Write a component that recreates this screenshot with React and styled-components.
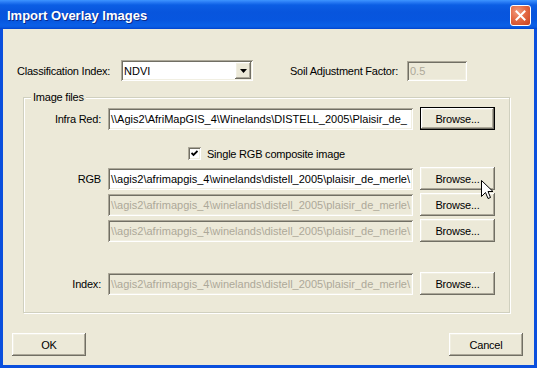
import React from 'react';
import styled, { createGlobalStyle } from 'styled-components';

const Global = createGlobalStyle`
  html, body { margin: 0; padding: 0; background: #ffffff; }
  body { font-family: "Liberation Sans", Arial, sans-serif; font-size: 11px; }
  * { box-sizing: border-box; }
`;

const Window = styled.div`
  position: relative;
  width: 537px;
  height: 368px;
  display: flex;
  flex-direction: column;
  background: #0A4FDD;
  overflow: hidden;
`;

const TitleBar = styled.div`
  flex: none;
  height: 29px;
  display: flex;
  align-items: center;
  justify-content: space-between;
  padding: 0 6px 0 7px;
  background: linear-gradient(
    to bottom,
    #3D95FF 0px,
    #2A7DF5 2px,
    #0B5EE4 5px,
    #0855DD 12px,
    #0756DF 20px,
    #0A5FE6 25px,
    #0A5BE2 27px,
    #0043CF 29px
  );
`;

const Title = styled.span`
  color: #ffffff;
  font-family: "Liberation Sans", Arial, sans-serif;
  font-weight: bold;
  font-size: 13px;
  text-shadow: 1px 1px 0 #0A2A8A;
  margin-top: 1px;
`;

const CloseButton = styled.div`
  width: 21px;
  height: 21px;
  border: 1px solid #ffffff;
  border-radius: 3px;
  background: radial-gradient(circle at 35% 30%, #F29B7E 0%, #E46A44 45%, #C9411E 100%);
  display: flex;
  align-items: center;
  justify-content: center;
  margin-top: 2px;
`;

const Body = styled.div`
  flex: 1;
  margin: 0 3px 3px 3px;
  background: #ECE9D8;
  display: flex;
  flex-direction: column;
  padding-top: 31px;
`;

const TopRow = styled.div`
  display: flex;
  align-items: center;
  height: 21px;
  padding: 0 67px 0 14px;
`;

const Label = styled.span`
  color: #000000;
  white-space: nowrap;
  letter-spacing: -0.22px;
  width: ${p => (p.$width ? `${p.$width}px` : 'auto')};
  text-align: ${p => (p.$right ? 'right' : 'left')};
`;

const Spacer = styled.div`
  flex: 1;
`;

const sunken = `
  box-shadow:
    inset 1px 1px 0 #ACA899,
    inset -1px -1px 0 #FFFFFF,
    inset 2px 2px 0 #716F64,
    inset -2px -2px 0 #F1EFE2;
`;

const raised = `
  box-shadow:
    inset -1px -1px 0 #716F64,
    inset 1px 1px 0 #FFFFFF,
    inset -2px -2px 0 #ACA899,
    inset 2px 2px 0 #F1EFE2;
`;

const Combo = styled.div`
  width: 132px;
  height: 21px;
  background: #ffffff;
  ${sunken}
  display: flex;
  align-items: center;
  padding: 2px 2px 2px 3px;
`;

const ComboText = styled.span`
  flex: 1;
  color: #000;
`;

const ComboButton = styled.div`
  width: 16px;
  height: 17px;
  background: #ECE9D8;
  ${raised}
  display: flex;
  align-items: center;
  justify-content: center;
`;

const Field = styled.div`
  width: ${p => p.$width}px;
  height: ${p => p.$height || 22}px;
  background: ${p => (p.$disabled ? '#ECE9D8' : '#FFFFFF')};
  color: ${p => (p.$disabled ? '#ACA899' : '#000000')};
  ${sunken}
  padding: 0 2px 0 3px;
  display: flex;
  align-items: center;
  white-space: nowrap;
  overflow: hidden;
`;

const Group = styled.div`
  position: relative;
  margin: 16px 0 0 20px;
  width: 487px;
  height: 216px;
  border: 1px solid #D0D0BF;
  box-shadow: inset 1px 1px 0 #ffffff, 1px 1px 0 #ffffff;
  padding-top: 9px;
  display: flex;
  flex-direction: column;
`;

const Legend = styled.span`
  position: absolute;
  top: -7px;
  left: 7px;
  padding: 0 2px;
  background: #ECE9D8;
  color: #000;
  letter-spacing: -0.22px;
`;

const FileRow = styled.div`
  display: grid;
  grid-template-columns: 77px 305px 75px;
  column-gap: 7px;
  align-items: center;
  height: 23px;
  margin-top: ${p => p.$gap || 0}px;
`;

const CheckRow = styled.div`
  display: flex;
  align-items: center;
  gap: 6px;
  height: 13px;
  margin-top: 17px;
  padding-left: 164px;
`;

const CheckBox = styled.div`
  width: 13px;
  height: 13px;
  background: #ffffff;
  ${sunken}
  display: flex;
  align-items: center;
  justify-content: center;
`;

const Button = styled.div`
  width: ${p => p.$width || 75}px;
  height: 23px;
  background: #ECE9D8;
  color: #000;
  letter-spacing: -0.2px;
  display: flex;
  align-items: center;
  justify-content: center;
  border: ${p => (p.$default ? '1px solid #000000' : 'none')};
  ${raised}
`;

const Footer = styled.div`
  display: flex;
  justify-content: space-between;
  margin-top: 20px;
  padding: 0 11px 0 9px;
`;

const Cursor = styled.svg`
  position: absolute;
  left: 481px;
  top: 180px;
`;

const path1 = '\\\\Agis2\\AfriMapGIS_4\\Winelands\\DISTELL_2005\\Plaisir_de_';
const path2 = '\\\\agis2\\afrimapgis_4\\winelands\\distell_2005\\plaisir_de_merle\\';

export default function App() {
  return (
    <>
      <Global />
      <Window>
        <TitleBar>
          <Title>Import Overlay Images</Title>
          <CloseButton>
            <svg width="11" height="11" viewBox="0 0 11 11">
              <path d="M1.5 1.5 L9.5 9.5 M9.5 1.5 L1.5 9.5" stroke="#ffffff" strokeWidth="2" strokeLinecap="square" />
            </svg>
          </CloseButton>
        </TitleBar>
        <Body>
          <TopRow>
            <Label $width={104}>Classification Index:</Label>
            <Combo>
              <ComboText>NDVI</ComboText>
              <ComboButton>
                <svg width="7" height="4" viewBox="0 0 7 4">
                  <path d="M0 0 H7 L3.5 4 Z" fill="#000" />
                </svg>
              </ComboButton>
            </Combo>
            <Spacer />
            <Label>Soil Adjustment Factor:</Label>
            <Field $width={60} $height={20} $disabled style={{ marginLeft: 9 }}>0.5</Field>
          </TopRow>

          <Group>
            <Legend>Image files</Legend>
            <FileRow>
              <Label $right>Infra Red:</Label>
              <Field $width={305}>{path1}</Field>
              <Button $default>Browse...</Button>
            </FileRow>
            <CheckRow>
              <CheckBox>
                <svg width="7" height="7" viewBox="0 0 7 7">
                  <path d="M0.5 3 L2.5 5 L6.5 1" stroke="#000" strokeWidth="1.8" fill="none" />
                </svg>
              </CheckBox>
              <Label>Single RGB composite image</Label>
            </CheckRow>
            <FileRow $gap={7}>
              <Label $right>RGB</Label>
              <Field $width={305}>{path2}</Field>
              <Button>Browse...</Button>
            </FileRow>
            <FileRow $gap={3}>
              <span />
              <Field $width={305} $disabled>{path2}</Field>
              <Button>Browse...</Button>
            </FileRow>
            <FileRow $gap={3}>
              <span />
              <Field $width={305} $disabled>{path2}</Field>
              <Button>Browse...</Button>
            </FileRow>
            <FileRow $gap={30}>
              <Label $right>Index:</Label>
              <Field $width={305} $disabled>{path2}</Field>
              <Button>Browse...</Button>
            </FileRow>
          </Group>

          <Footer>
            <Button $width={74}>OK</Button>
            <Button $width={74}>Cancel</Button>
          </Footer>
        </Body>
        <Cursor width="13" height="21" viewBox="0 0 13 21">
          <path d="M0.5 0.5 L0.5 16.5 L4.5 12.5 L7 18.5 L9.5 17.5 L7 11.5 L12 11.5 Z" fill="#ffffff" stroke="#000000" strokeWidth="1" strokeLinejoin="miter" />
        </Cursor>
      </Window>
    </>
  );
}
